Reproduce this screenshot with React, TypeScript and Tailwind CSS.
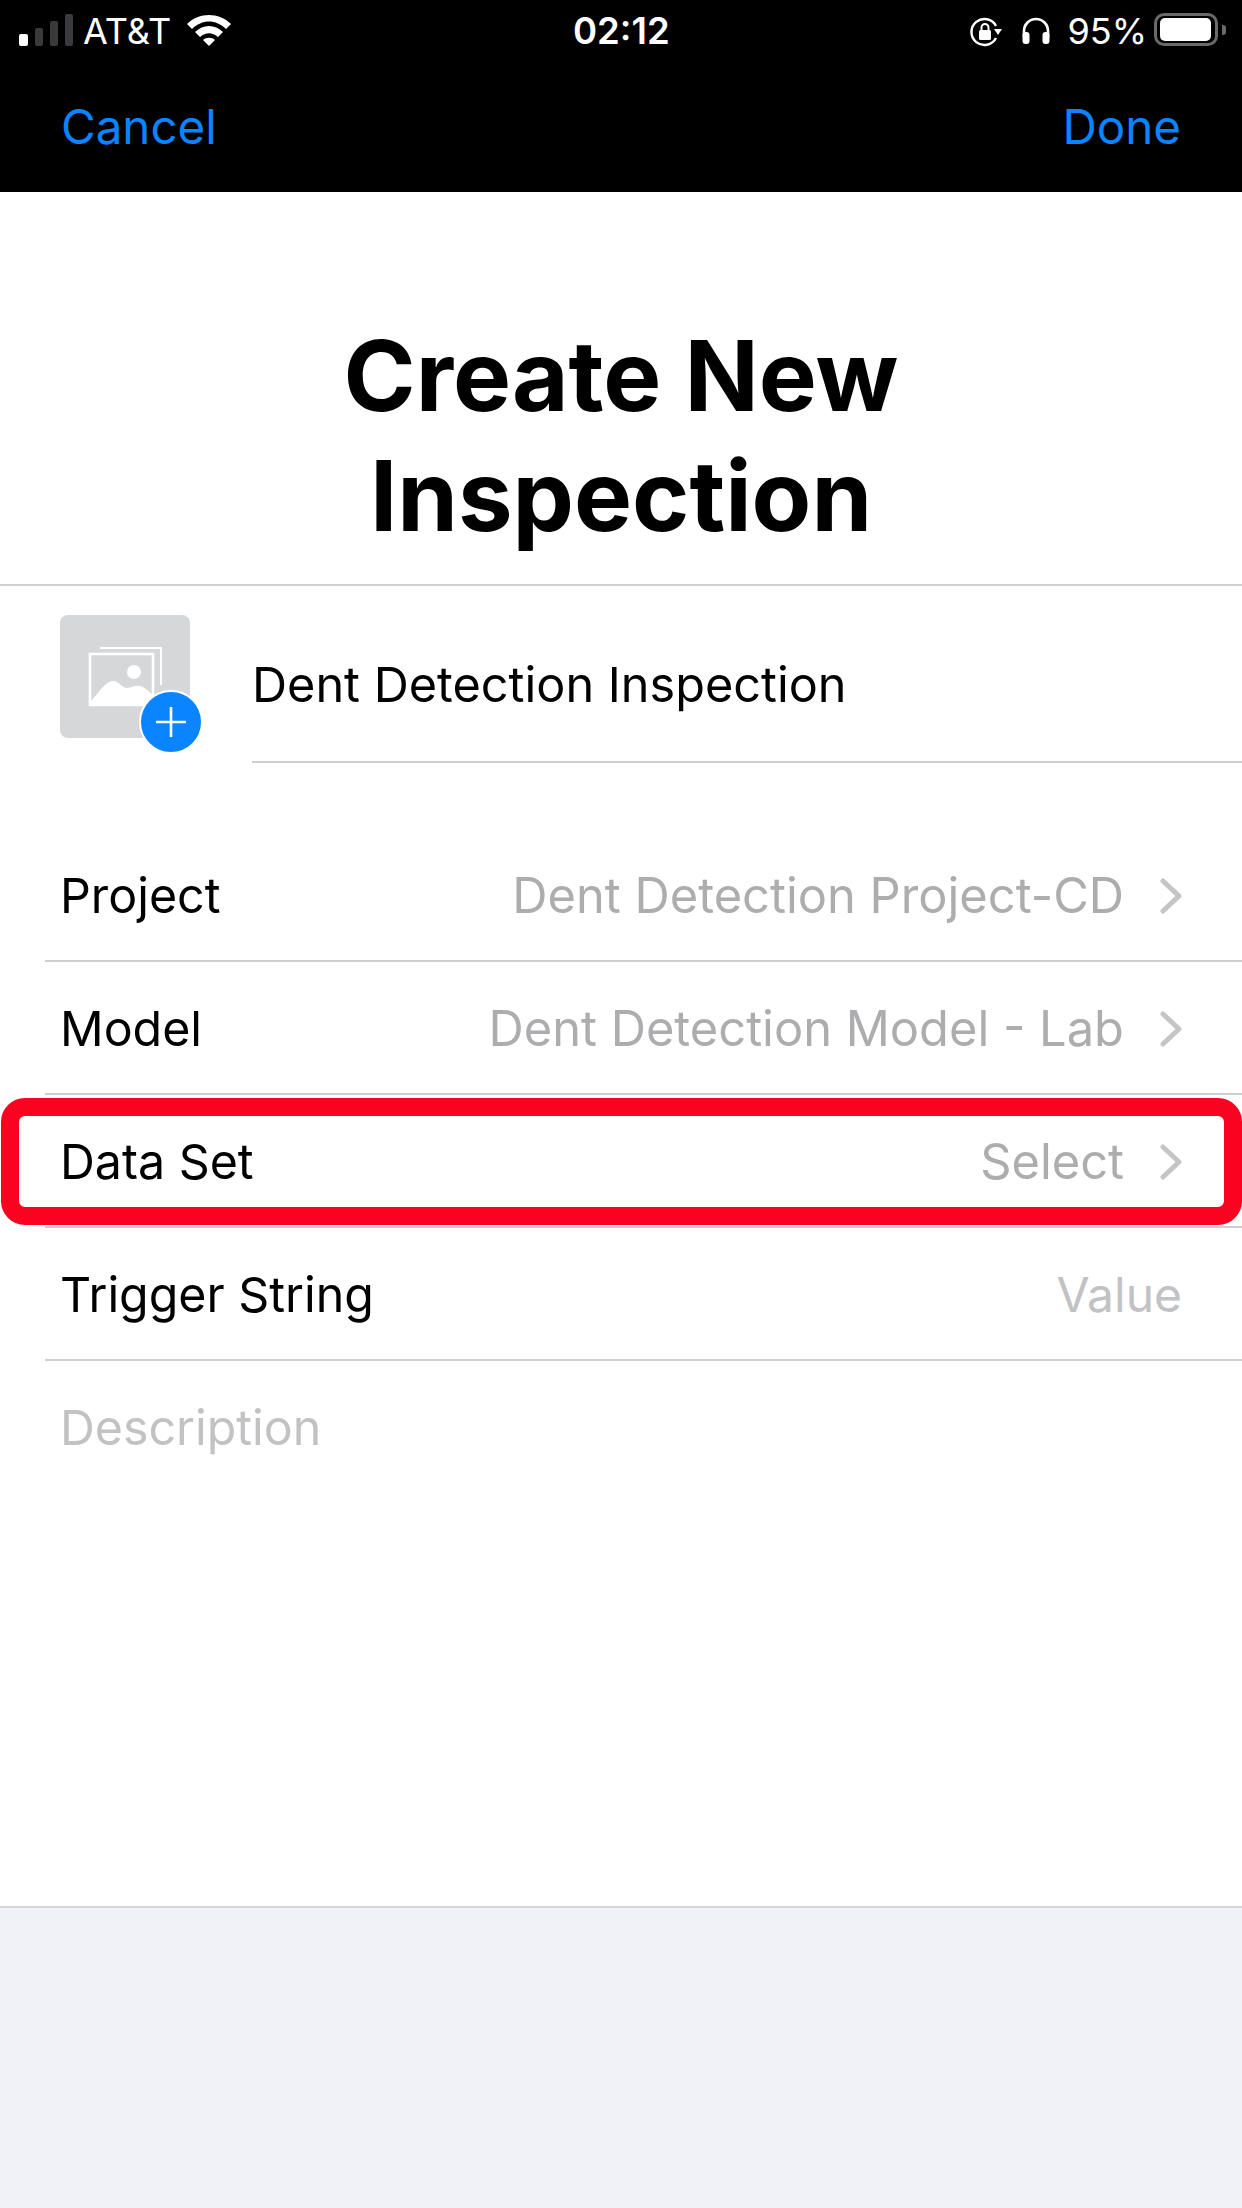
const inter = "font-['Inter','Liberation_Sans',sans-serif]";

function Chevron() {
  return (
    <svg width="22" height="36" viewBox="0 0 22 36" className="shrink-0">
      <path d="M3 3 L19 18 L3 33" fill="none" stroke="#c5c5c8" strokeWidth="5" strokeLinecap="round" strokeLinejoin="round" />
    </svg>
  );
}

function StatusBar() {
  return (
    <div className="relative flex h-[62px] items-start text-white">
      <div className="flex items-end gap-[7px] pl-[19px] pt-[14px]">
        <span className="h-[12px] w-[9px] rounded-[2px] bg-white" />
        <span className="h-[18px] w-[8px] rounded-[2px] bg-[#3a3a3c]" />
        <span className="h-[25px] w-[8px] rounded-[2px] bg-[#3a3a3c]" />
        <span className="h-[32px] w-[8px] rounded-[2px] bg-[#3a3a3c]" />
      </div>
      <span className="ml-[10px] mt-[10px] text-[36px] leading-[42px] font-normal">AT&amp;T</span>
      <svg width="46" height="34" viewBox="0 0 46 34" className="ml-[15px] mt-[13px]">
        <path d="M1 11 C13 -1 33 -1 45 11 L40 16 C30 6 16 6 6 16 Z" fill="#fff" />
        <path d="M9 19 C17 11 29 11 37 19 L32 24 C26 19 20 19 14 24 Z" fill="#fff" />
        <path d="M17 27 C20 24 26 24 29 27 L23 33 Z" fill="#fff" />
      </svg>
      <span className="absolute left-[573px] top-[10px] text-[36.5px] leading-[42px] font-semibold">02:12</span>
      <div className="ml-auto flex items-start pr-[16px]">
        <svg width="32" height="30" viewBox="0 0 32 30" className="mt-[17px]">
          <path d="M26 21 A13 13 0 1 1 26 9" fill="none" stroke="#fff" strokeWidth="2.4" />
          <path d="M24 12 L32 12 L28 18 Z" fill="#fff" />
          <rect x="9" y="13" width="12" height="10" rx="1.5" fill="#fff" />
          <path d="M11.5 13 V10.5 A3.5 3.5 0 0 1 18.5 10.5 V13" fill="none" stroke="#fff" strokeWidth="2" />
        </svg>
        <svg width="30" height="28" viewBox="0 0 30 28" className="ml-[19px] mt-[17px]">
          <path d="M3 20 V14 A12 12 0 0 1 27 14 V20" fill="none" stroke="#fff" strokeWidth="2.6" />
          <rect x="1.5" y="15" width="7" height="12" rx="3" fill="#fff" />
          <rect x="21.5" y="15" width="7" height="12" rx="3" fill="#fff" />
        </svg>
        <span className="ml-[16px] mt-[10px] text-[36px] leading-[42px] font-normal">95%</span>
        <div className="ml-[7px] mt-[13px] flex h-[33px] w-[64px] items-center rounded-[10px] border-[3px] border-[#6a6a6c] pl-[3px]">
          <span className="h-[23px] w-[51px] rounded-[5px] bg-white" />
        </div>
        <span className="ml-[4px] mt-[25px] h-[10px] w-[4px] rounded-r-[3px] bg-[#6a6a6c]" />
      </div>
    </div>
  );
}

function Row({ label, value, chevron = true, light = false, highlight = false }: { label: string; value: string; chevron?: boolean; light?: boolean; highlight?: boolean }) {
  return (
    <div className="relative ml-[45px] flex h-[133px] items-center border-b-2 border-[#cfcfd1] pl-[16px] pr-[60px] pt-[2px]">
      <span className="-ml-[1px] text-[48.3px] leading-[58px] text-black">{label}</span>
      <span className={`ml-auto leading-[58px] ${light ? "text-[48px] text-[#c2c2c5]" : "text-[48.8px] text-[#adadb0]"}`}>{value}</span>
      {chevron && <span className="ml-[36px] flex"><Chevron /></span>}
      {highlight && (
        <span className="absolute -left-[44px] right-0 top-[3px] h-[127px] rounded-[24px] border-[18px] border-[#fb0320]" />
      )}
    </div>
  );
}

export default function App() {
  return (
    <div className={`${inter} flex h-[2208px] w-[1242px] flex-col overflow-hidden bg-white`}>
      <header className="h-[192px] shrink-0 bg-black">
        <StatusBar />
        <div className="flex items-center justify-between px-[61px] pt-[35px] text-[47.5px] leading-[60px] text-[#0a84ff]">
          <span>Cancel</span>
          <span>Done</span>
        </div>
      </header>

      <main className="flex flex-1 flex-col">
        <div className="flex h-[394px] shrink-0 items-start justify-center border-b-2 border-[#d0d0d2] pt-[124px]">
          <h1 className="text-center text-[97.5px] leading-[120px] font-bold text-black">Create New<br />Inspection</h1>
        </div>

        <div className="flex h-[177px] shrink-0">
          <div className="relative ml-[60px] mt-[29px] h-[123px] w-[130px] shrink-0 rounded-[8px] bg-[#d6d7d9]">
            <svg width="80" height="64" viewBox="0 0 80 64" className="absolute left-[28px] top-[30px]">
              <path d="M12 3 H73 V40" fill="none" stroke="#fff" strokeWidth="2" />
              <path d="M2 9 H65 V60 H2 Z" fill="none" stroke="#fff" strokeWidth="2.6" />
              <circle cx="46" cy="27" r="7" fill="#fff" />
              <path d="M3 60 V56 C12 46 18 36 25 36 C31 36 34 43 39 43 C44 43 47 40 52 41 C57 42 61 47 65 50 V60 Z" fill="#fff" />
            </svg>
            <span className="absolute left-[79px] top-[75px] flex h-[64px] w-[64px] items-center justify-center rounded-full border-2 border-white bg-[#0a84ff]">
              <svg width="32" height="32" viewBox="0 0 32 32">
                <path d="M16 1 V31 M1 16 H31" stroke="#fff" strokeWidth="2.6" />
              </svg>
            </span>
          </div>
          <div className="ml-[62px] flex flex-1 items-center border-b-2 border-[#cfcfd1] pt-[22px] text-[48.6px] leading-[58px] text-black">
            Dent Detection Inspection
          </div>
        </div>

        <div className="mt-[66px] flex shrink-0 flex-col">
          <Row label="Project" value="Dent Detection Project-CD" />
          <Row label="Model" value="Dent Detection Model - Lab" />
          <Row label="Data Set" value="Select" highlight />
          <Row label="Trigger String" value="Value" chevron={false} light />
        </div>

        <div className="flex-1 pl-[60px] pt-[38px] text-[48.3px] leading-[58px] text-[#c2c2c5]">Description</div>
      </main>

      <footer className="h-[302px] shrink-0 border-t-2 border-[#d4d4d8] bg-[#f1f2f7]" />
    </div>
  );
}
